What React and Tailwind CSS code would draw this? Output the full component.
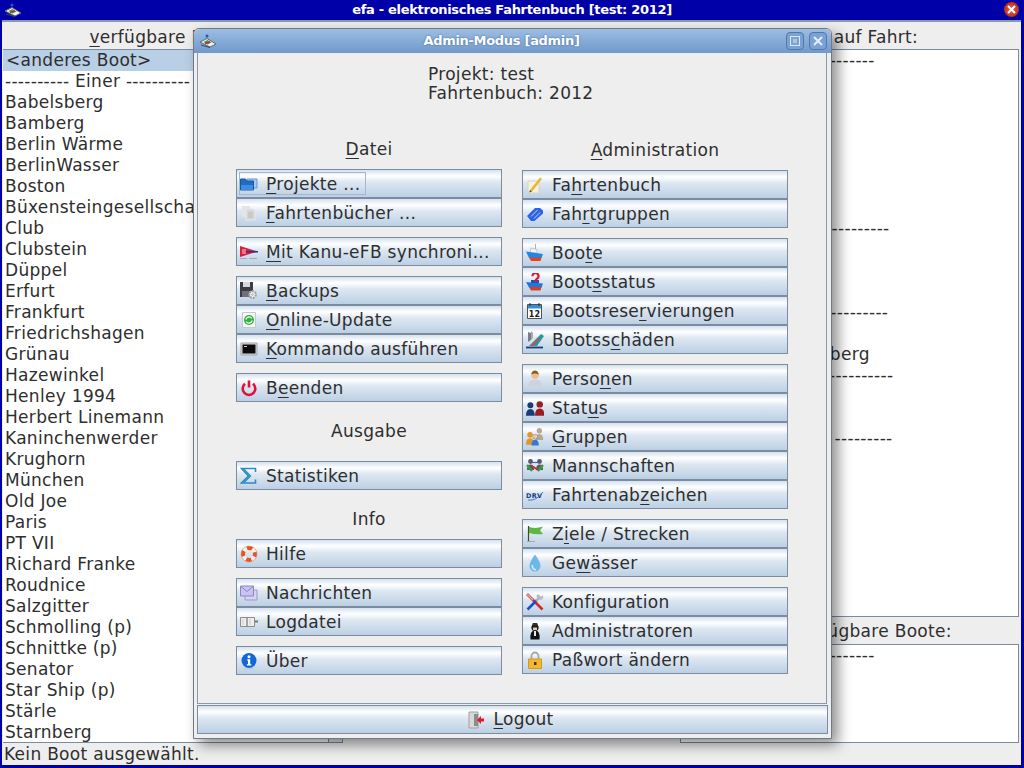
import React from 'react'

const boote = ['Babelsberg', 'Bamberg', 'Berlin Wärme', 'BerlinWasser', 'Boston', 'Büxensteingesellschaft', 'Club', 'Clubstein', 'Düppel', 'Erfurt', 'Frankfurt', 'Friedrichshagen', 'Grünau', 'Hazewinkel', 'Henley 1994', 'Herbert Linemann', 'Kaninchenwerder', 'Krughorn', 'München', 'Old Joe', 'Paris', 'PT VII', 'Richard Franke', 'Roudnice', 'Salzgitter', 'Schmolling (p)', 'Schnittke (p)', 'Senator', 'Star Ship (p)', 'Stärle', 'Starnberg']

// Zeilen der rechten Liste, der Rest liegt unter dem Dialog
const aufFahrt = ['---------- Einer -----------', '', '', '', '', '', '', '', '---------- Zweier -----------', '', '', '', '---------- Vierer ------------', '', 'Ruderverein Alteberg', '---------- Achter ------------', '', '', '---------- Sonstige ---------']

const Icon = ({ children }) => (
    <svg width="18" height="18" viewBox="0 0 18 18" className="shrink-0">{children}</svg>
)

const person = (x, y, c, s = 1) => (
    <g transform={`translate(${x} ${y}) scale(${s})`}>
        <circle cx="3.5" cy="2.5" r="2.4" fill={c} />
        <path d="M0 11 Q0 5.5 3.5 5.5 Q7 5.5 7 11 Z" fill={c} />
    </g>
)

const icons = {
    projekte: <Icon><path d="M7 4h10v9H7z" fill="#a8c8ec" stroke="#6a98cc" /><path d="M0.500 4h5l1 2h7v9h-13z" fill="#1f6cc8" stroke="#1a56a0" /><path d="M1 10h12v5H1z" fill="#3d8ee0" /></Icon>,
    buecher: <Icon><path d="M2 2h8v11H2z" fill="#e4e4e4" /><path d="M6 5h7l2 2v9H6z" fill="#d6d6d6" stroke="#e8e8e8" /><path d="M8 9h5M8 11h5M8 13h5" stroke="#bdbdbd" /></Icon>,
    kanu: <Icon><path d="M0 3l18 5.500L0 14z" fill="#d8203c" /><path d="M5 8h13v1.500H5z" fill="#1c3c9c" /><path d="M2 6h4v5H2z" fill="#e87888" /><path d="M0 15.500h7M9 15.500h8" stroke="#a8a8c0" /></Icon>,
    backups: <Icon><path d="M0 0h13v15H0z" fill="#3c3c44" /><path d="M3 0h7v5H3z" fill="#d8d8dc" /><path d="M2 9h8v6H2z" fill="#70707a" /><circle cx="12.500" cy="12.500" r="3.400" fill="#f0f0f0" stroke="#9c9c9c" strokeWidth="2" strokeDasharray="2 1" /><circle cx="12.500" cy="12.500" r="1.200" fill="#bdbdbd" /></Icon>,
    update: <Icon><path d="M2.500 1.500h13v15h-13z" fill="#f6f6f6" stroke="#c8c8c8" /><circle cx="9" cy="9" r="5" fill="#30b040" /><path d="M5.800 8.500a3.300 3.300 0 0 1 6-1M12.200 9.500a3.300 3.300 0 0 1-6 1" stroke="#e8fce8" strokeWidth="1.300" fill="none" /></Icon>,
    kommando: <Icon><path d="M1 3h16v12H1z" fill="#d8d8d8" stroke="#a4a4a4" /><path d="M2.500 4.500h13v9h-13z" fill="#0c0c0c" /><path d="M4 6.500h3" stroke="#d0d0d0" /></Icon>,
    beenden: <Icon><path d="M5 4.800a6.300 6.300 0 1 0 8 0" stroke="#e0103c" strokeWidth="2.600" fill="none" /><path d="M9 1.500v7" stroke="#e0103c" strokeWidth="2.600" /></Icon>,
    statistik: <Icon><path d="M15.500 5V1.500H1.500l7 7.500-7 7h14V12.500" stroke="#2a8cc0" strokeWidth="1.600" fill="none" /><path d="M3.500 1.800l7 7.200-6.500 6.500" stroke="#2a8cc0" strokeWidth="1.400" fill="none" /></Icon>,
    hilfe: <Icon><circle cx="9" cy="9" r="6" fill="none" stroke="#f4f0ec" strokeWidth="4" /><circle cx="9" cy="9" r="6" fill="none" stroke="#e85420" strokeWidth="4" strokeDasharray="5.400 4" strokeDashoffset="2.700" /><circle cx="9" cy="9" r="8" fill="none" stroke="#d88868" strokeWidth=".6" /></Icon>,
    nachricht: <Icon><path d="M5 6h12v10H5z" fill="#d8d4f4" stroke="#9c98d0" /><path d="M.500 2h13v10H.500z" fill="#c8c4f0" stroke="#8884c8" /><path d="M1 2.500l6 5 6-5" fill="none" stroke="#8884c8" /></Icon>,
    log: <Icon><path d="M.500 4.500h6.500v9H.500zM7 4.500h7.500v9H7z" fill="#efefef" stroke="#8c8c8c" /><path d="M3 6v6M10 6v6" stroke="#c8c8c8" /><path d="M15 8.500h3" stroke="#777" strokeWidth="2" /></Icon>,
    ueber: <Icon><circle cx="9" cy="8.500" r="7.500" fill="#1068d8" /><circle cx="9" cy="4.800" r="1.500" fill="#fff" /><path d="M7.200 7.200h3v5h1.200v1.400H6.800v-1.400h1.200v-3.600h-.8z" fill="#fff" /><path d="M4 16.800h10" stroke="#c4c8d0" /></Icon>,
    fahrtenbuch: <Icon><path d="M2 5h11v12H2z" fill="#f4f0e2" stroke="#d8d4c4" /><path d="M4 14L14 1.500l2 1.500L6 15.500z" fill="#e8b830" /><path d="M4 14l-.800 2.400L6 15.500z" fill="#604020" /></Icon>,
    gruppen1: <Icon><path d="M1 11L9 3h5l3 2.500v3L8.500 16H5z" fill="#2c64e4" /><path d="M5 11.500L11.500 5M8 13.500L14 7.500" stroke="#bcd0f8" /></Icon>,
    boot: <Icon><path d="M9.500 0v6" stroke="#b0b0b0" /><path d="M5 4l6 1.500V9H4z" fill="#f4f4f4" stroke="#c4c4c4" /><path d="M0 7.500L17 10l-1.500 4H3z" fill="#1c88e8" /><path d="M3 13.500h12.500L14.500 17H5z" fill="#e84020" /></Icon>,
    status: <Icon><path d="M0 9l17 1.500-1.500 4H3z" fill="#1c78e0" /><path d="M3 14h12.500L14.500 17.500H5z" fill="#d84020" /><path d="M5 7h8v3H5z" fill="#1858b8" /><path d="M6.500 3.200a3 3 0 1 1 4.300 2.600L9.500 7.500v1.500" stroke="#e01830" strokeWidth="2.200" fill="none" /></Icon>,
    kalender: <Icon><path d="M1.500 2.500h14v14h-14z" fill="#fff" stroke="#505050" /><path d="M2 3h13v3.500H2z" fill="#3090d8" /><path d="M4 1v3M13 1v3" stroke="#303030" /><text x="8.500" y="15" textAnchor="middle" fontFamily="'DejaVu Sans', sans-serif" fontSize="8" fontWeight="700" fill="#202020">12</text></Icon>,
    schaden: <Icon><path d="M0 16.500h17" stroke="#18407c" strokeWidth="1.800" /><path d="M3 15L15 3l3 2-7 10z" fill="#18a0a8" /><path d="M4 15l9.500-9 1 1.200L7 15z" fill="#d84848" /><path d="M2 1l3 1v7l-3 2z" fill="#7c7c88" /><path d="M5 0l2 2v5L5 9z" fill="#a8a8b0" /></Icon>,
    personen: <Icon><circle cx="9" cy="5" r="3.800" fill="#eebc8c" /><path d="M5.200 4.400Q6 .500 9 .500t3.800 3.900Q9 2.400 5.200 4.400z" fill="#8c5c20" /><path d="M2 16.500q0-7 7-7t7 7z" fill="#cfd2dc" /></Icon>,
    statusP: <Icon>{person(0, 3, '#183c74', 1.250)}{person(9, 2, '#9c1c24', 1.350)}</Icon>,
    gruppen: <Icon>{person(9.500, 0, '#b8a890', 1.100)}{person(0, 4, '#e09828', 1.150)}{person(5.500, 6, '#3878d0', 1.050)}<circle cx="9.200" cy="8.600" r="2.300" fill="#f0c8a0" /></Icon>,
    mannschaft: <Icon>{person(1, 2, '#585868', 1)}{person(10, 2, '#585868', 1)}<path d="M1 8l5 6M17 8l-5 6" stroke="#30a040" strokeWidth="2.200" /><path d="M6 9l6 4" stroke="#c03030" strokeWidth="1.800" /><path d="M6 5.500h6" stroke="#3868b8" strokeWidth="1.200" /></Icon>,
    drv: <Icon><text x="0" y="12" fontFamily="'DejaVu Sans', sans-serif" fontSize="6.500" fontWeight="700" fill="#1c3c84">DRV</text><path d="M2 14q8 1.500 15-8" stroke="#3c7cd8" fill="none" /></Icon>,
    ziele: <Icon><path d="M2.500 1v15" stroke="#3c4c30" strokeWidth="1.200" /><path d="M3 2q7 2 14-.5L14 5.500l3 3.500q-7 1-14-1z" fill="#5cb840" /><path d="M1 16.500h8" stroke="#a8a8a8" /></Icon>,
    gewaesser: <Icon><path d="M9 .500Q14.500 8 14.500 12a5.500 5.500 0 0 1-11 0Q3.500 8 9 .500z" fill="#6cb8e8" /><path d="M6.500 11a3 3.500 0 0 0 3.500 4.500" stroke="#d0ecfa" strokeWidth="1.600" fill="none" /></Icon>,
    konfig: <Icon><path d="M1 1l15.500 15.500" stroke="#d82828" strokeWidth="2.600" /><path d="M1 1l6 6" stroke="#b8b8c0" strokeWidth="1.600" /><path d="M1.500 16.500l9-9" stroke="#1c50c0" strokeWidth="2.600" /><path d="M10 8l3-3" stroke="#a8a8b0" strokeWidth="2" /><path d="M12 1a3 3 0 0 0 1 5.500 3 3 0 0 0 4-4l-2 1.200-1.500-1.500z" fill="#b8b8c4" /></Icon>,
    admin: <Icon><circle cx="9" cy="5.500" r="3.600" fill="#181818" /><path d="M6.800 1h4.400l.800 2.500H6z" fill="#303030" /><path d="M7 5.500h4V8H7z" fill="#e8c8a0" /><path d="M4.500 17.500q-1-9 4.500-9t4.500 9z" fill="#101010" /><path d="M8 9h2v5H8z" fill="#e8e8e8" /></Icon>,
    lock: <Icon><path d="M5.500 8V5a3.500 3.500 0 0 1 7 0v3" stroke="#a8a8a8" strokeWidth="1.800" fill="none" /><path d="M2.500 8h13v9.500h-13z" fill="#f4b830" stroke="#d89818" /><path d="M8 11h2.500v3H8z" fill="#503810" /></Icon>,
    logout: <Icon><path d="M2 1h9v16H2z" fill="#d8d8d8" stroke="#a0a0a0" /><path d="M7 3h4v12H7z" fill="#8c8c8c" /><path d="M10 9l4-4v2.500h3v3h-3V13z" fill="#e01828" /></Icon>,
}

const Logo = () => (
    <svg width="17" height="14" viewBox="0 0 17 14">
        <circle cx="7" cy="2" r="1.500" fill="#3050b8" />
        <path d="M0 8L7 4.500 16 10l-6 3z" fill="#eef2f4" stroke="#5c6870" />
        <path d="M3.500 8L7.500 6l4 2.500-4 2z" fill="#28a850" />
        <path d="M5 9.500l5-1.500" stroke="#d82030" strokeWidth="1.600" />
        <path d="M1 11l9 2.500" stroke="#3c4850" />
    </svg>
)

const Mnemonic = ({ text, u }) => {
    if (u === undefined) return text
    return (
        <>
            {text.slice(0, u)}
            <span className="underline underline-offset-[3px] decoration-[1px]">{text[u]}</span>
            {text.slice(u + 1)}
        </>
    )
}

const gradient = 'bg-[linear-gradient(#d4e1ee_0%,#ffffff_22%,#dde7f1_45%,#bcd0e4_100%)]'

const Boton = ({ icon, text, u, focus }) => (
    <div className={`relative flex h-[29px] w-[266px] items-center border border-[#7b8ba0] pl-[3px] ${gradient}`}>
        <span className="flex w-[26px] justify-start">{icons[icon]}</span>
        <span className="whitespace-nowrap pt-[2px] leading-none"><Mnemonic text={text} u={u} /></span>
        {focus && <span className="absolute left-[2px] top-[2px] h-[23px] w-[127px] border border-[#a3b8cf]"></span>}
    </div>
)

const Titulo = ({ text, u, className }) => (
    <div className={`flex h-5 w-[266px] items-center justify-center pt-[2px] ${className || ''}`}>
        <span><Mnemonic text={text} u={u} /></span>
    </div>
)

const Grupo = ({ items, className }) => (
    <div className={`flex flex-col ${className || 'mt-[10px]'}`}>
        {items.map(b => <Boton key={b.text} {...b} />)}
    </div>
)

const Lista = ({ rows, className }) => (
    <div className={`overflow-hidden border border-[#7b8ba0] bg-white ${className}`}>
        {rows.map((r, i) => <div key={i} className="h-[21px] whitespace-nowrap pl-[2px] leading-[21px]">{r}</div>)}
    </div>
)

const Dialogo = () => (
    <div className="absolute left-[193px] top-[28px] flex h-[711px] w-[639px] flex-col rounded-t-[6px] border border-[#6f7a86] bg-[#eeeeee] shadow-[6px_6px_14px_rgba(0,0,0,0.45)]">
        <div className="relative flex h-[24px] shrink-0 items-center justify-center rounded-t-[6px] bg-[linear-gradient(#9dbde2,#7099cb)] pr-[22px]">
            <span className="absolute left-[6px] top-[5px]"><Logo /></span>
            <span className="text-[13px] font-bold tracking-[-0.3px] text-white [text-shadow:0_0_2px_#3c6298]">Admin-Modus [admin]</span>
            <span className="absolute right-[27px] top-[3px] flex h-[18px] w-[18px] items-center justify-center rounded-[4px] border border-[#4f78ab] bg-[#7ba2d2]">
                <span className="flex h-[10px] w-[10px] items-center justify-center border border-[#d8e6f6]"><span className="h-[4px] w-[4px] bg-[#a9c5e6]"></span></span>
            </span>
            <span className="absolute right-[4px] top-[3px] flex h-[18px] w-[18px] items-center justify-center rounded-[4px] border border-[#4f78ab] bg-[#7ba2d2]">
                <svg width="10" height="10" viewBox="0 0 10 10"><path d="M1 1l8 8M9 1l-8 8" stroke="#e4eefa" strokeWidth="2" /></svg>
            </span>
        </div>
        <div className="ml-[3px] mr-[4px] flex h-[651px] flex-col border-x border-b border-[#8a98a8]">
            <div className="ml-[230px] mt-[12px] leading-[19px]">
                <div>Projekt: test</div>
                <div>Fahrtenbuch: 2012</div>
            </div>
            <div className="ml-[38px] mt-[36px] flex gap-[20px]">
                <div className="flex flex-col">
                    <Titulo text="Datei" u={0} className="mb-[10px]" />
                    <Grupo className="mt-0" items={[
                        { icon: 'projekte', text: 'Projekte ...', u: 0, focus: true },
                        { icon: 'buecher', text: 'Fahrtenbücher ...', u: 0 },
                    ]} />
                    <Grupo items={[{ icon: 'kanu', text: 'Mit Kanu-eFB synchroni...', u: 0 }]} />
                    <Grupo items={[
                        { icon: 'backups', text: 'Backups', u: 0 },
                        { icon: 'update', text: 'Online-Update', u: 0 },
                        { icon: 'kommando', text: 'Kommando ausführen', u: 0 },
                    ]} />
                    <Grupo items={[{ icon: 'beenden', text: 'Beenden', u: 1 }]} />
                    <Titulo text="Ausgabe" className="mb-[20px] mt-[19px]" />
                    <Grupo className="mt-0" items={[{ icon: 'statistik', text: 'Statistiken' }]} />
                    <Titulo text="Info" className="mb-[10px] mt-[19px]" />
                    <Grupo className="mt-0" items={[{ icon: 'hilfe', text: 'Hilfe' }]} />
                    <Grupo items={[
                        { icon: 'nachricht', text: 'Nachrichten' },
                        { icon: 'log', text: 'Logdatei' },
                    ]} />
                    <Grupo items={[{ icon: 'ueber', text: 'Über' }]} />
                </div>
                <div className="mt-px flex flex-col">
                    <Titulo text="Administration" u={0} className="mb-[10px]" />
                    <Grupo className="mt-0" items={[
                        { icon: 'fahrtenbuch', text: 'Fahrtenbuch', u: 2 },
                        { icon: 'gruppen1', text: 'Fahrtgruppen', u: 3 },
                    ]} />
                    <Grupo items={[
                        { icon: 'boot', text: 'Boote', u: 3 },
                        { icon: 'status', text: 'Bootsstatus', u: 4 },
                        { icon: 'kalender', text: 'Bootsreservierungen', u: 9 },
                        { icon: 'schaden', text: 'Bootsschäden', u: 6 },
                    ]} />
                    <Grupo items={[
                        { icon: 'personen', text: 'Personen', u: 5 },
                        { icon: 'statusP', text: 'Status', u: 4 },
                        { icon: 'gruppen', text: 'Gruppen', u: 0 },
                        { icon: 'mannschaft', text: 'Mannschaften' },
                        { icon: 'drv', text: 'Fahrtenabzeichen', u: 9 },
                    ]} />
                    <Grupo items={[
                        { icon: 'ziele', text: 'Ziele / Strecken', u: 1 },
                        { icon: 'gewaesser', text: 'Gewässer', u: 2 },
                    ]} />
                    <Grupo items={[
                        { icon: 'konfig', text: 'Konfiguration' },
                        { icon: 'admin', text: 'Administratoren' },
                        { icon: 'lock', text: 'Paßwort ändern' },
                    ]} />
                </div>
            </div>
        </div>
        <div className={`mx-[3px] mt-[1px] flex h-[29px] items-center justify-center gap-[8px] border border-[#7b8ba0] pr-[4px] ${gradient}`}>
            {icons.logout}
            <span className="leading-none"><Mnemonic text="Logout" u={0} /></span>
        </div>
    </div>
)

export default function App() {
    return (
        <div className="relative flex h-[768px] w-[1024px] flex-col overflow-hidden bg-[#0000a8] text-[17px] tracking-[0.3px] text-[#2e2e2e] [font-family:'DejaVu_Sans',sans-serif]">
            <div className="relative flex h-[20px] shrink-0 items-center justify-center">
                <span className="absolute left-[5px] top-[3px]"><Logo /></span>
                <span className="text-[13px] font-bold tracking-[-0.3px] text-white">efa - elektronisches Fahrtenbuch [test: 2012]</span>
                <span className="absolute right-[5px] top-[2px] flex h-[15px] w-[15px] items-center justify-center rounded-full bg-[radial-gradient(#f06050,#a81800)]">
                    <svg width="9" height="9" viewBox="0 0 9 9"><path d="M1 1l7 7M8 1l-7 7" stroke="#fff" strokeWidth="2" /></svg>
                </span>
            </div>
            <div className="mb-[3px] ml-[2px] mr-[3px] flex min-h-0 flex-1 flex-col border-t-2 border-[#8a98a8] bg-[#eeeeee] pl-px pr-[2px]">
                <div className="flex min-h-0 flex-1">
                    <div className="flex w-[340px] flex-col">
                        <div className="h-[27px] pr-[8px] pt-[4px] text-center leading-[22px]"><Mnemonic text="verfügbare Boote:" u={0} /></div>
                        <div className="relative h-[695px] overflow-hidden border-y border-[#7b8ba0] bg-white">
                            <div className="h-[21px] whitespace-nowrap bg-[#b8cfe5] pl-[3px] leading-[21px]">&lt;anderes Boot&gt;</div>
                            <div className="h-[21px] whitespace-nowrap pl-[2px] leading-[21px]">---------- Einer ----------</div>
                            {boote.map(b => <div key={b} className="h-[21px] whitespace-nowrap pl-[2px] leading-[21px]">{b}</div>)}
                            <span className="absolute bottom-0 right-0 h-[6px] w-[15px] border-x border-t border-[#7b8ba0] bg-[#dfe7ef]"></span>
                        </div>
                    </div>
                    <div className="flex-1"></div>
                    <div className="flex w-[339px] flex-col">
                        <div className="h-[27px] pr-[4px] pt-[4px] text-center leading-[22px]">Boote auf Fahrt:</div>
                        <Lista rows={aufFahrt} className="h-[569px]" />
                        <div className="h-[27px] pr-[4px] pt-[3px] text-center leading-[22px]">nicht verfügbare Boote:</div>
                        <Lista rows={['---------- Einer -----------']} className="h-[99px]" />
                    </div>
                </div>
                <div className="h-[22px] shrink-0 pl-[1px] leading-[22px]">Kein Boot ausgewählt.</div>
            </div>
            <Dialogo />
        </div>
    )
}
